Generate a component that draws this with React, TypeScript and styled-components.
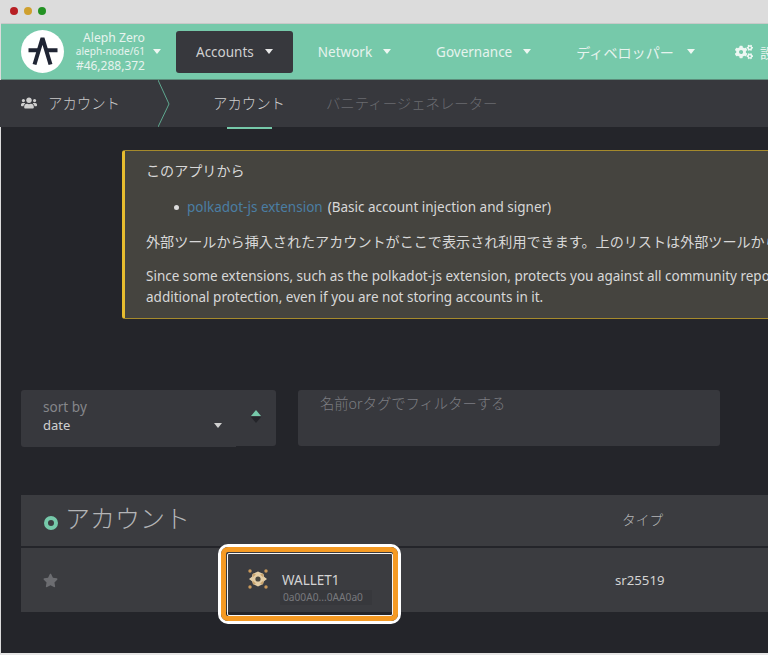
import React from "react";
import styled, { createGlobalStyle } from "styled-components";
import { FaCogs, FaUsers, FaStar } from "react-icons/fa";

const BG = "#24252a";
const Global = createGlobalStyle`
  html, body { margin: 0; padding: 0; background: ${BG}; }
  * { box-sizing: border-box; }
`;
const FONT = `"Noto Sans", "Noto Sans CJK JP", sans-serif`;

const Page = styled.div`
  width: 768px; height: 655px; overflow: hidden; background: ${BG};
  font-family: ${FONT}; color: #d6d6d6; display: flex; flex-direction: column;
  position: relative;
  &::after {
    content: ""; position: absolute; inset: 0; pointer-events: none;
    border-left: 1px solid #dcdcdc; border-bottom: 2px solid #e6e6e6;
  }
`;
const TitleBar = styled.div`
  height: 24px; flex: none; background: #dcdcdc; display: flex; align-items: center;
  gap: 6px; padding: 0 0 1px 10px; border-bottom: 1px solid #c9c9c9;
`;
const Light = styled.span<{ $c: string }>`
  width: 8px; height: 8px; border-radius: 50%; background: ${p => p.$c};
`;
const Nav = styled.div`
  height: 56px; flex: none; background: #76c9aa; display: flex; align-items: center;
  padding-left: 21px; white-space: nowrap; border-bottom: 1px solid #5c8d7b;
`;
const Logo = styled.div`
  width: 43px; height: 43px; border-radius: 50%; background: #fff; flex: none;
  display: flex; align-items: center; justify-content: center;
`;
const Chain = styled.div`
  width: 69px; margin-left: 12px; flex: none; display: flex; flex-direction: column; align-items: flex-end;
  color: #e6f3ee; text-align: right;
`;
const ChainName = styled.div`font-size: 12.2px; line-height: 14px;`;
const ChainNode = styled.div`font-size: 10.1px; line-height: 13px;`;
const ChainBlock = styled.div`font-size: 12px; line-height: 15px;`;
const Caret = styled.span<{ $c?: string; $ml?: number }>`
  flex: none; width: 0; height: 0; border-left: 4.5px solid transparent; border-right: 4.5px solid transparent;
  border-top: 5.5px solid ${p => p.$c || "#eef7f3"}; margin-left: ${p => p.$ml ?? 11}px; display: inline-block;
`;
const NavItem = styled.div<{ $size?: number }>`
  height: 42px; display: flex; align-items: center; padding: 0 20px; flex: none; margin-left: 5px;
  font-size: ${p => p.$size ?? 13.5}px; color: #e6f3ee; border-radius: 3px;
`;
const ActiveNavItem = styled(NavItem)`
  margin-left: 15px; color: #d0d0d0; background: #37383d;
`;
const SettingsItem = styled(NavItem)`
  padding-left: 15px; gap: 7px;
`;
const Tabs = styled.div`
  height: 47px; flex: none; background: #37383d; display: flex; align-items: center;
  white-space: nowrap; position: relative; z-index: 1;
`;
const Section = styled.div`
  width: 158px; flex: none; padding: 0 0 2px 21px; display: flex; align-items: center; gap: 11px;
  font-size: 14.4px; color: #c9c9c9; height: 100%; font-weight: 300;
`;
const Chevron = styled.svg`flex: none; margin-right: 43px;`;
const Tab = styled.div<{ $active?: boolean }>`
  height: 100%; display: flex; align-items: center; font-size: 14.4px; position: relative; font-weight: 300;
  padding-bottom: 2px;
  color: ${p => p.$active ? "#cfcfcf" : "#6a6b70"};
  margin-right: 41px;
  ${p => p.$active ? `&::after { content: ""; position: absolute; left: 14px; width: 45px; bottom: -2px; height: 2px; background: #76c9aa; }` : ""}
`;
const Main = styled.div`
  flex: 1; min-height: 0; display: flex; flex-direction: column; padding-left: 21px; position: relative;
`;
const Banner = styled.div`
  margin: 23px 0 0 101px; width: 900px; height: 169px; flex: none;
  background: #45443f; border: 1px solid #a58a2c; border-left: 3px solid #e6bc2f; border-radius: 3px;
  padding: 9px 0 0 21px; font-size: 13.5px; color: #d8d8d8; white-space: nowrap;
`;
const JpLine = styled.div<{ $mt?: number }>`font-size: 14.1px; line-height: 22px; margin-top: ${p => p.$mt ?? 0}px;`;
const EnLine = styled.div<{ $mt?: number }>`line-height: 21px; margin-top: ${p => p.$mt ?? 0}px;`;
const Bullet = styled.div`
  display: flex; align-items: center; margin: 14px 0 0 28px; line-height: 22px;
  &::before { content: ""; width: 5px; height: 5px; border-radius: 50%; background: #dcdcdc; margin-right: 8px; }
`;
const Link = styled.span`color: #4b7ea3; margin-right: 5px;`;
const Filters = styled.div`
  margin-top: 71px; height: 57px; flex: none; display: flex; gap: 22px; align-items: flex-start;
`;
const Sort = styled.div`
  width: 255px; display: flex; align-items: flex-start; flex: none;
`;
const SortField = styled.div`
  width: 215px; height: 57px; background: #37383d; border-radius: 3px 0 0 3px; padding: 8px 0 0 22px;
  display: flex; flex-direction: column;
`;
const SortLabel = styled.div`font-size: 13.6px; line-height: 17px; color: #85868a;`;
const SortRow = styled.div`display: flex; align-items: center; justify-content: space-between; font-size: 13px; line-height: 20px; color: #d0d0d0; padding-right: 14px;`;
const Arrows = styled.div`
  flex: 1; height: 56px; background: #37383d; border-radius: 0 3px 3px 0; display: flex; flex-direction: column; align-items: center;
  padding: 20px 0 0; gap: 0;
`;
const ArrowUp = styled.span`
  width: 0; height: 0; border-left: 5px solid transparent; border-right: 5px solid transparent; border-bottom: 6px solid #76c9aa;
`;
const ArrowDown = styled.span`
  width: 0; height: 0; border-left: 5px solid transparent; border-right: 5px solid transparent; border-top: 6px solid ${BG}; margin-top: 1px;
`;
const Search = styled.div`
  width: 422px; height: 56px; background: #37383d; border-radius: 3px; padding: 3px 0 0 22px; font-size: 14.3px; font-weight: 300; color: #7d7e82; flex: none; line-height: 22px;
`;
const Table = styled.div`margin-top: 48px; width: 900px; flex: none; display: flex; flex-direction: column; gap: 2px;`;
const HeadRow = styled.div`
  height: 51px; background: #3b3c40; display: flex; align-items: center;
`;
const Heading = styled.div`
  width: 601px; flex: none; padding: 0 0 7px 23px; display: flex; align-items: center; gap: 7px; font-size: 25px; font-weight: 300; color: #b4b5b7;
`;
const Ring = styled.span`
  width: 14px; height: 14px; border-radius: 50%; border: 4.5px solid #76c9aa; background: #3b3c40; flex: none; margin-top: 11px;
`;
const TypeHead = styled.div`font-size: 13.7px; font-weight: 300; color: #b4b5b7; padding-bottom: 4px;`;
const Row = styled.div`
  height: 64px; background: #3b3c40; display: flex; align-items: center;
`;
const StarCell = styled.div`width: 205px; padding: 1px 0 0 22px; flex: none; display: flex; color: #6c6d71;`;
const Account = styled.div`
  width: 389px; flex: none; align-self: stretch; display: flex; flex-direction: column; position: relative; padding: 23px 0 0 56px;
`;
const AccName = styled.div`font-size: 13.5px; color: #d3d3d3; line-height: 18px;`;
const Addr = styled.div`
  align-self: flex-start; font-size: 10.2px; line-height: 15px; color: #77787c; background: #37383c; padding: 0 9px 0 3px; margin: 1px 0 0 -2px;
`;
const Identicon = styled.svg`position: absolute; left: 21px; top: 20px;`;
const Type = styled.div`font-size: 13.2px; color: #d3d3d3;`;
const Highlight = styled.div`
  position: absolute; left: 218px; top: 544px; width: 183px; height: 80px; border-radius: 10px;
  border: 3px solid #fff; pointer-events: none;
  &::before { content: ""; position: absolute; inset: 0; border-radius: 7px; border: 5.5px solid #f59a23; }
  &::after { content: ""; position: absolute; inset: 5.5px; border-radius: 2px; border: 1.5px solid #f6f6f6; }
`;

export default function App() {
  return (
    <Page>
      <Global />
      <TitleBar>
        <Light $c="#b81f24" /><Light $c="#cfa02e" /><Light $c="#239223" />
      </TitleBar>
      <Nav>
        <Logo>
          <svg width="32" height="32" viewBox="0 0 32 32" fill="none" stroke="#1f2433" strokeWidth="4" strokeLinejoin="bevel">
            <path d="M7.500 28.500 L15.500 2 L23.500 28.500" />
            <path d="M1.500 14.300 H12 M19 14.300 H30.500" />
          </svg>
        </Logo>
        <Chain>
          <ChainName>Aleph Zero</ChainName>
          <ChainNode>aleph-node/61</ChainNode>
          <ChainBlock>#46,288,372</ChainBlock>
        </Chain>
        <Caret $ml={8} />
        <ActiveNavItem>Accounts<Caret $c="#e8e8e8" /></ActiveNavItem>
        <NavItem>Network<Caret /></NavItem>
        <NavItem>Governance<Caret /></NavItem>
        <NavItem $size={14.1}>ディベロッパー<Caret $ml={13} /></NavItem>
        <SettingsItem $size={14.1}><FaCogs size={18} color="#eef7f3" />設定</SettingsItem>
      </Nav>
      <Tabs>
        <Section><FaUsers size={16} color="#cfcfcf" />アカウント</Section>
        <Chevron width="12" height="47" viewBox="0 0 12 47" fill="none" stroke="#5fa890" strokeWidth="1">
          <path d="M0 0 L11 24 L0 47" />
        </Chevron>
        <Tab $active>アカウント</Tab>
        <Tab>バニティージェネレーター</Tab>
      </Tabs>
      <Main>
        <Banner>
          <JpLine>このアプリから</JpLine>
          <Bullet><Link>polkadot-js extension</Link>(Basic account injection and signer)</Bullet>
          <JpLine $mt={13}>外部ツールから挿入されたアカウントがここで表示され利用できます。上のリストは外部ツールから</JpLine>
          <EnLine $mt={13}>Since some extensions, such as the polkadot-js extension, protects you against all community reported phishing sites</EnLine>
          <EnLine>additional protection, even if you are not storing accounts in it.</EnLine>
        </Banner>
        <Filters>
          <Sort>
            <SortField>
              <SortLabel>sort by</SortLabel>
              <SortRow>date<Caret $c="#d0d0d0" /></SortRow>
            </SortField>
            <Arrows><ArrowUp /><ArrowDown /></Arrows>
          </Sort>
          <Search>名前orタグでフィルターする</Search>
        </Filters>
        <Table>
          <HeadRow>
            <Heading><Ring />アカウント</Heading>
            <TypeHead>タイプ</TypeHead>
          </HeadRow>
          <Row>
            <StarCell><FaStar size={15} /></StarCell>
            <Account>
              <Identicon width="22" height="22" viewBox="0 0 22 22">
                <path d="M2 11 L6 8 V14 Z M20 11 L16 8 V14 Z" fill="#e6d2ad" />
                <path d="M11 3.500 L16.500 6 L17.500 11 L16 16 L11 18.500 L6 16 L4.500 11 L5.500 6 Z" fill="#e4cda5" />
                <path d="M6 5.500 L9 6.500 L5.500 9.500 Z M16 5.500 L13 6.500 L16.500 9.500 Z M6 16.500 L9 15.500 L5.500 12.500 Z M16 16.500 L13 15.500 L16.500 12.500 Z" fill="#c9a36c" />
                <circle cx="11" cy="11" r="2.600" fill="#4a4840" />
                <circle cx="3" cy="3" r="1.700" fill="#c9985a" /><circle cx="19" cy="3" r="1.700" fill="#c9985a" />
                <circle cx="3" cy="19" r="1.700" fill="#c9985a" /><circle cx="19" cy="19" r="1.700" fill="#c9985a" />
              </Identicon>
              <AccName>WALLET1</AccName>
              <Addr>0a00A0...0AA0a0</Addr>
            </Account>
            <Type>sr25519</Type>
          </Row>
        </Table>
      </Main>
      <Highlight />
    </Page>
  );
}
